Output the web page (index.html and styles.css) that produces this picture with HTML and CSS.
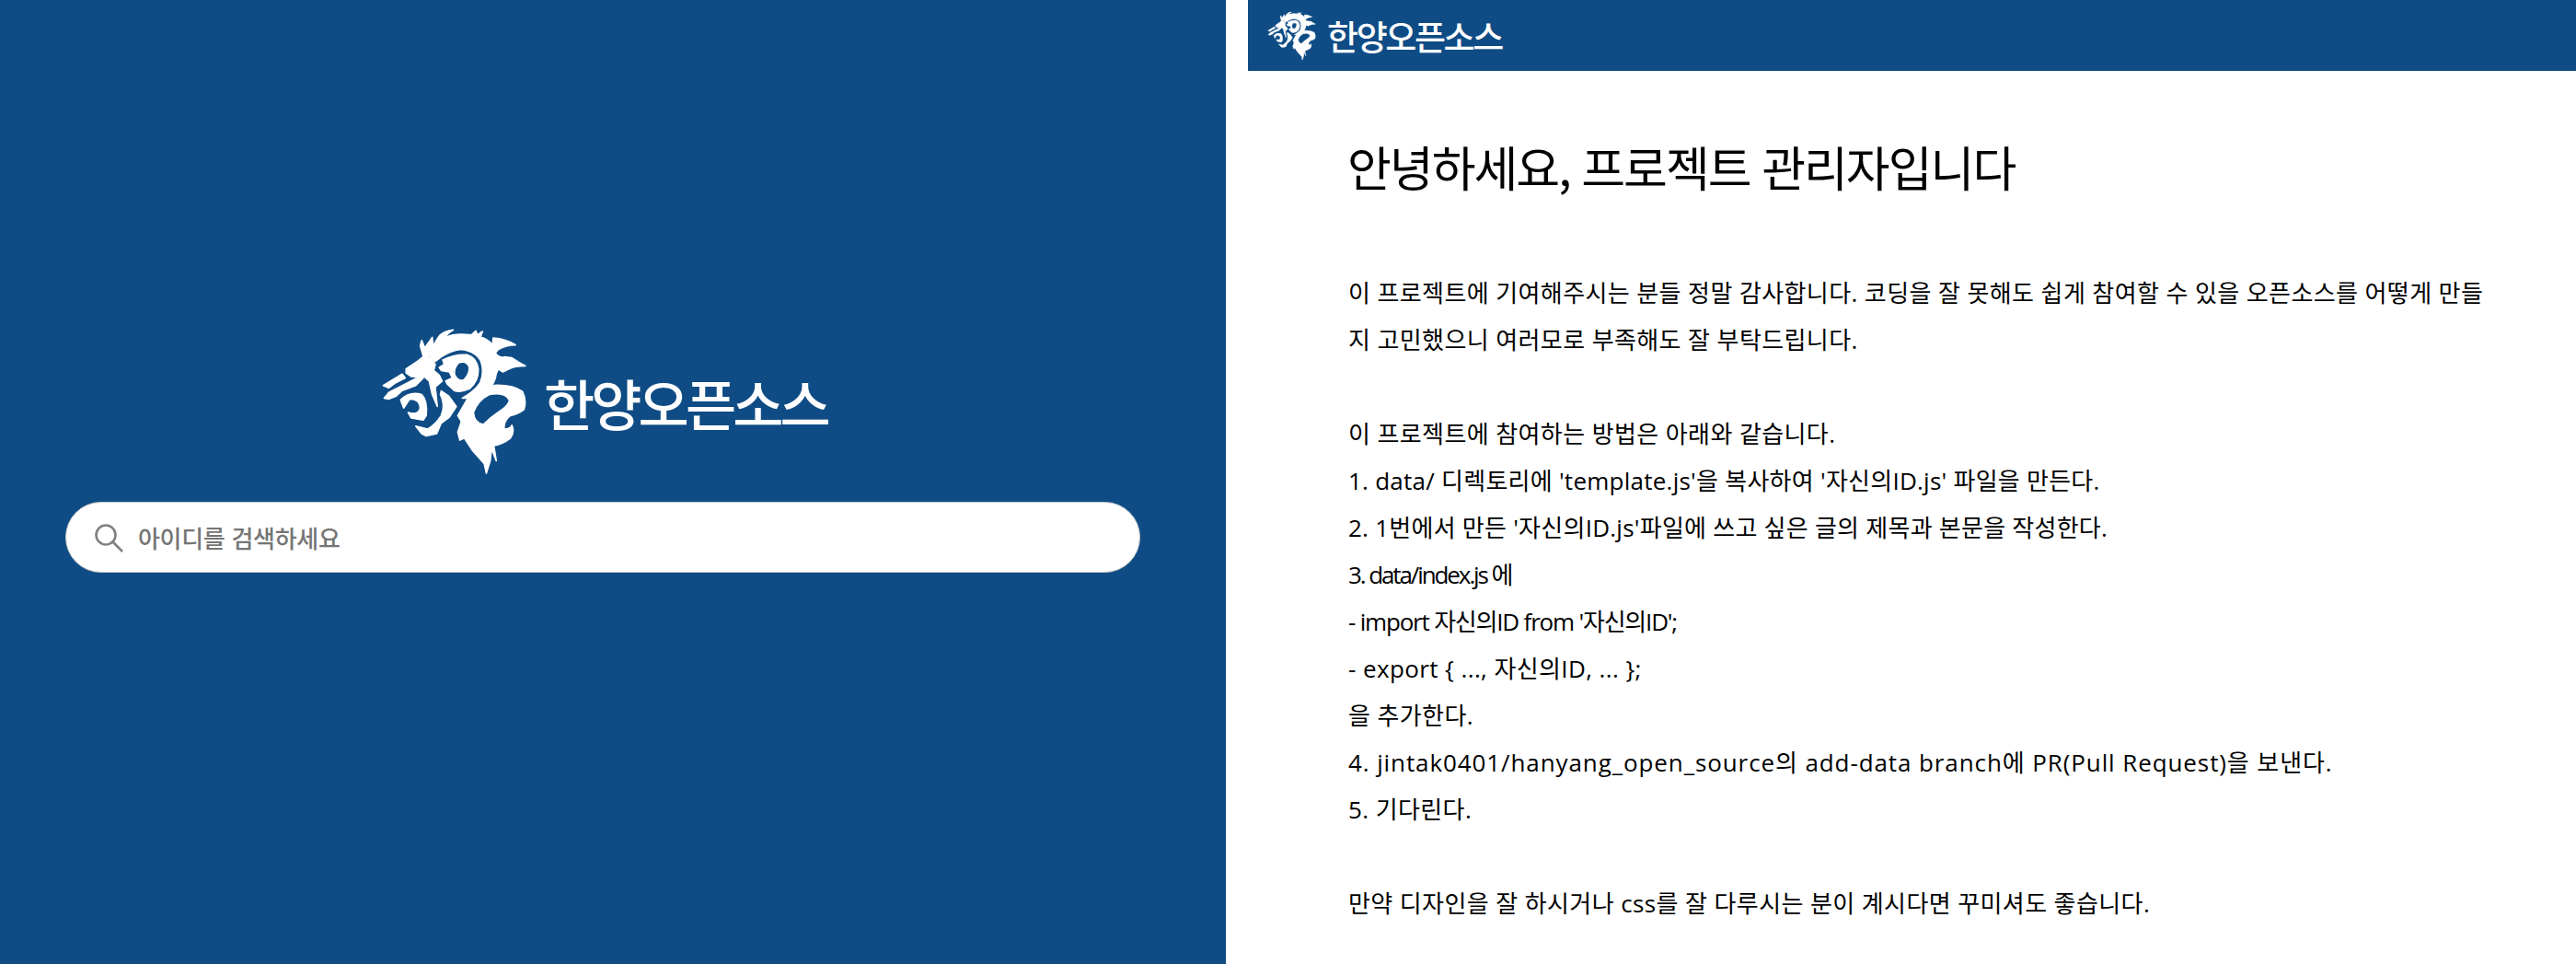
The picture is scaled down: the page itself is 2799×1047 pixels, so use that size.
FILE: index.html
```html
<!DOCTYPE html>
<html lang="ko">
<head>
<meta charset="utf-8">
<title>한양오픈소스</title>
<link rel="stylesheet" href="styles.css">
</head>
<body>
<svg class="defs" width="0" height="0" aria-hidden="true">
  <symbol id="lion" viewBox="35 25 486 496">
    <g class="lion-shape">
    <path d="M175 122L165 88L170 70L180 95L205 60L208 88L225 60Q240 38 275 35Q252 48 250 60Q280 45 335 52L350 38L355 52L372 40L365 60Q385 62 405 85L408 62Q450 65 482 85Q450 85 425 100L415 112Q430 130 445 125L470 128Q495 145 515 155Q480 155 460 165L440 175L425 165L418 180Q415 215 385 237Q350 250 325 262L305 262Q345 240 365 210Q380 170 365 135Q345 105 300 100Q265 105 235 125L215 140L195 120L180 125Z"/>
    <path fill-rule="evenodd" d="M228 160L245 150L240 135Q280 115 320 118Q352 125 358 165Q360 205 330 230Q300 245 280 238L255 215L250 205L272 195L262 175L235 170ZM292 145Q275 165 280 185Q292 210 312 200Q330 180 328 158Q318 135 292 145Z"/>
    <path d="M42 220L105 182L115 195L85 210L60 228Z"/>
    <path d="M118 165L158 138L178 122L200 128L215 150L210 170L228 185L238 205L215 225L222 290L205 250L195 205L178 190L170 200L150 220L105 237L85 255L60 265L45 262L62 242L110 218L160 192L135 190L118 178Z"/>
    <path d="M100 268Q130 238 170 250Q190 270 185 320L175 335L135 328L125 310Q160 320 165 295Q165 265 130 265L110 295Z"/>
    <path d="M235 238L260 255L285 290L262 325L235 345L220 380L185 388L170 380L150 355L190 365Q215 350 235 320Q250 285 232 250Z"/>
    <path fill-rule="evenodd" d="M290 320L320 268Q350 240 400 220Q470 215 505 240Q520 270 510 300Q490 315 465 320Q440 340 445 365Q465 365 470 352Q480 375 465 395Q440 415 410 420L418 470L402 430L398 470L385 512L378 480L362 462L338 435L312 395L297 402L290 375L302 340ZM395 250Q355 270 342 310Q345 345 375 350Q400 325 430 305Q455 290 462 270Q450 240 395 250Z"/>
    </g>
  </symbol>
</svg>
<main class="split">
  <section class="search-pane">
    <div class="search-inner">
      <div class="brand brand-large">
        <svg class="lion"><use href="#lion"/></svg>
        <span class="wordmark">한양오픈소스</span>
      </div>
      <div class="search-box">
        <svg class="search-icon" viewBox="0 0 32 32">
          <circle cx="13" cy="13" r="10.5"/>
          <path d="M20.5 20.5 31 31"/>
        </svg>
        <span class="placeholder">아이디를 검색하세요</span>
      </div>
    </div>
  </section>
  <section class="content-pane">
    <header class="topbar">
      <div class="brand brand-small">
        <svg class="lion"><use href="#lion"/></svg>
        <span class="wordmark">한양오픈소스</span>
      </div>
    </header>
    <article class="post">
      <h1 class="post-title">안녕하세요, 프로젝트 관리자입니다</h1>
      <p class="post-body">이 프로젝트에 기여해주시는 분들 정말 감사합니다. 코딩을 잘 못해도 쉽게 참여할 수 있을 오픈소스를 어떻게 만들<br>지 고민했으니 여러모로 부족해도 잘 부탁드립니다.<br><br>이 프로젝트에 참여하는 방법은 아래와 같습니다.<br><span class="snug">1. data/ 디렉토리에 'template.js'을 복사하여 '자신의ID.js' 파일을 만든다.</span><br><span class="snug">2. 1번에서 만든 '자신의ID.js'파일에 쓰고 싶은 글의 제목과 본문을 작성한다.</span><br><span class="tighter">3. data/index.js 에</span><br><span class="tight">- import 자신의ID from '자신의ID';</span><br>- export { ..., 자신의ID, ... };<br>을 추가한다.<br><span class="wide">4. jintak0401/hanyang_open_source의 add-data branch에 PR(Pull Request)을 보낸다.</span><br>5. 기다린다.<br><br>만약 디자인을 잘 하시거나 css를 잘 다루시는 분이 계시다면 꾸미셔도 좋습니다.</p>
    </article>
  </section>
</main>
</body>
</html>
```
FILE: styles.css
```css
* { box-sizing: border-box; }
html, body { margin: 0; height: 100%; overflow: hidden; background: #fff; }
body { font-family: "Noto Sans CJK KR", "Noto Sans", sans-serif; }
.defs { display: block; }
.lion-shape { fill: #fff; stroke: #fff; stroke-width: 5; stroke-linejoin: round; }
.split { display: flex; height: 1047px; gap: 24px; }
.search-pane { width: 1332px; background: #0f4c85; padding: 355px 0 0 71px; }
.search-inner { width: 1168px; display: flex; flex-direction: column; }
.brand { display: flex; align-items: center; color: #fff; }
.brand-large { gap: 18px; height: 162px; margin-left: 343px; }
.brand-large .lion { width: 159px; height: 162px; }
.brand-large .wordmark { font-size: 60px; font-weight: 500; letter-spacing: -3.9px; }
.brand-small .lion { width: 53px; height: 54px; }
.brand-small { gap: 12px; }
.brand-small .wordmark { font-size: 37px; font-weight: 500; letter-spacing: -2.4px; }
.search-box { width: 1168px; height: 77px; margin-top: 28px; background: #fff; border-radius: 39px; display: flex; align-items: center; padding-left: 30px; gap: 16px; border: 1px solid #c9c9c9; }
.search-icon { width: 32px; height: 32px; fill: none; stroke: #808080; stroke-width: 2.6; }
.placeholder { font-size: 26px; font-weight: 500; color: #757575; letter-spacing: -0.3px; }
.content-pane { flex: 1; min-width: 0; }
.topbar { height: 77px; background: #0f4c85; display: flex; align-items: center; padding-left: 21px; }
.post { padding: 63px 0 0 109px; }
.post-title { margin: 0 0 0 -1px; font-size: 52px; font-weight: 400; letter-spacing: -2px; line-height: 82px; color: #000; }
.post-body { margin: 71px 0 0; font-family: "Open Sans", "Noto Sans CJK KR", sans-serif; font-size: 26px; line-height: 51px; letter-spacing: 0.4px; color: #000; font-weight: 400; }
.snug { letter-spacing: 0.25px; }
.tighter { letter-spacing: -2.1px; }
.tight { letter-spacing: -1.2px; }
.wide { letter-spacing: 0.9px; }
```
